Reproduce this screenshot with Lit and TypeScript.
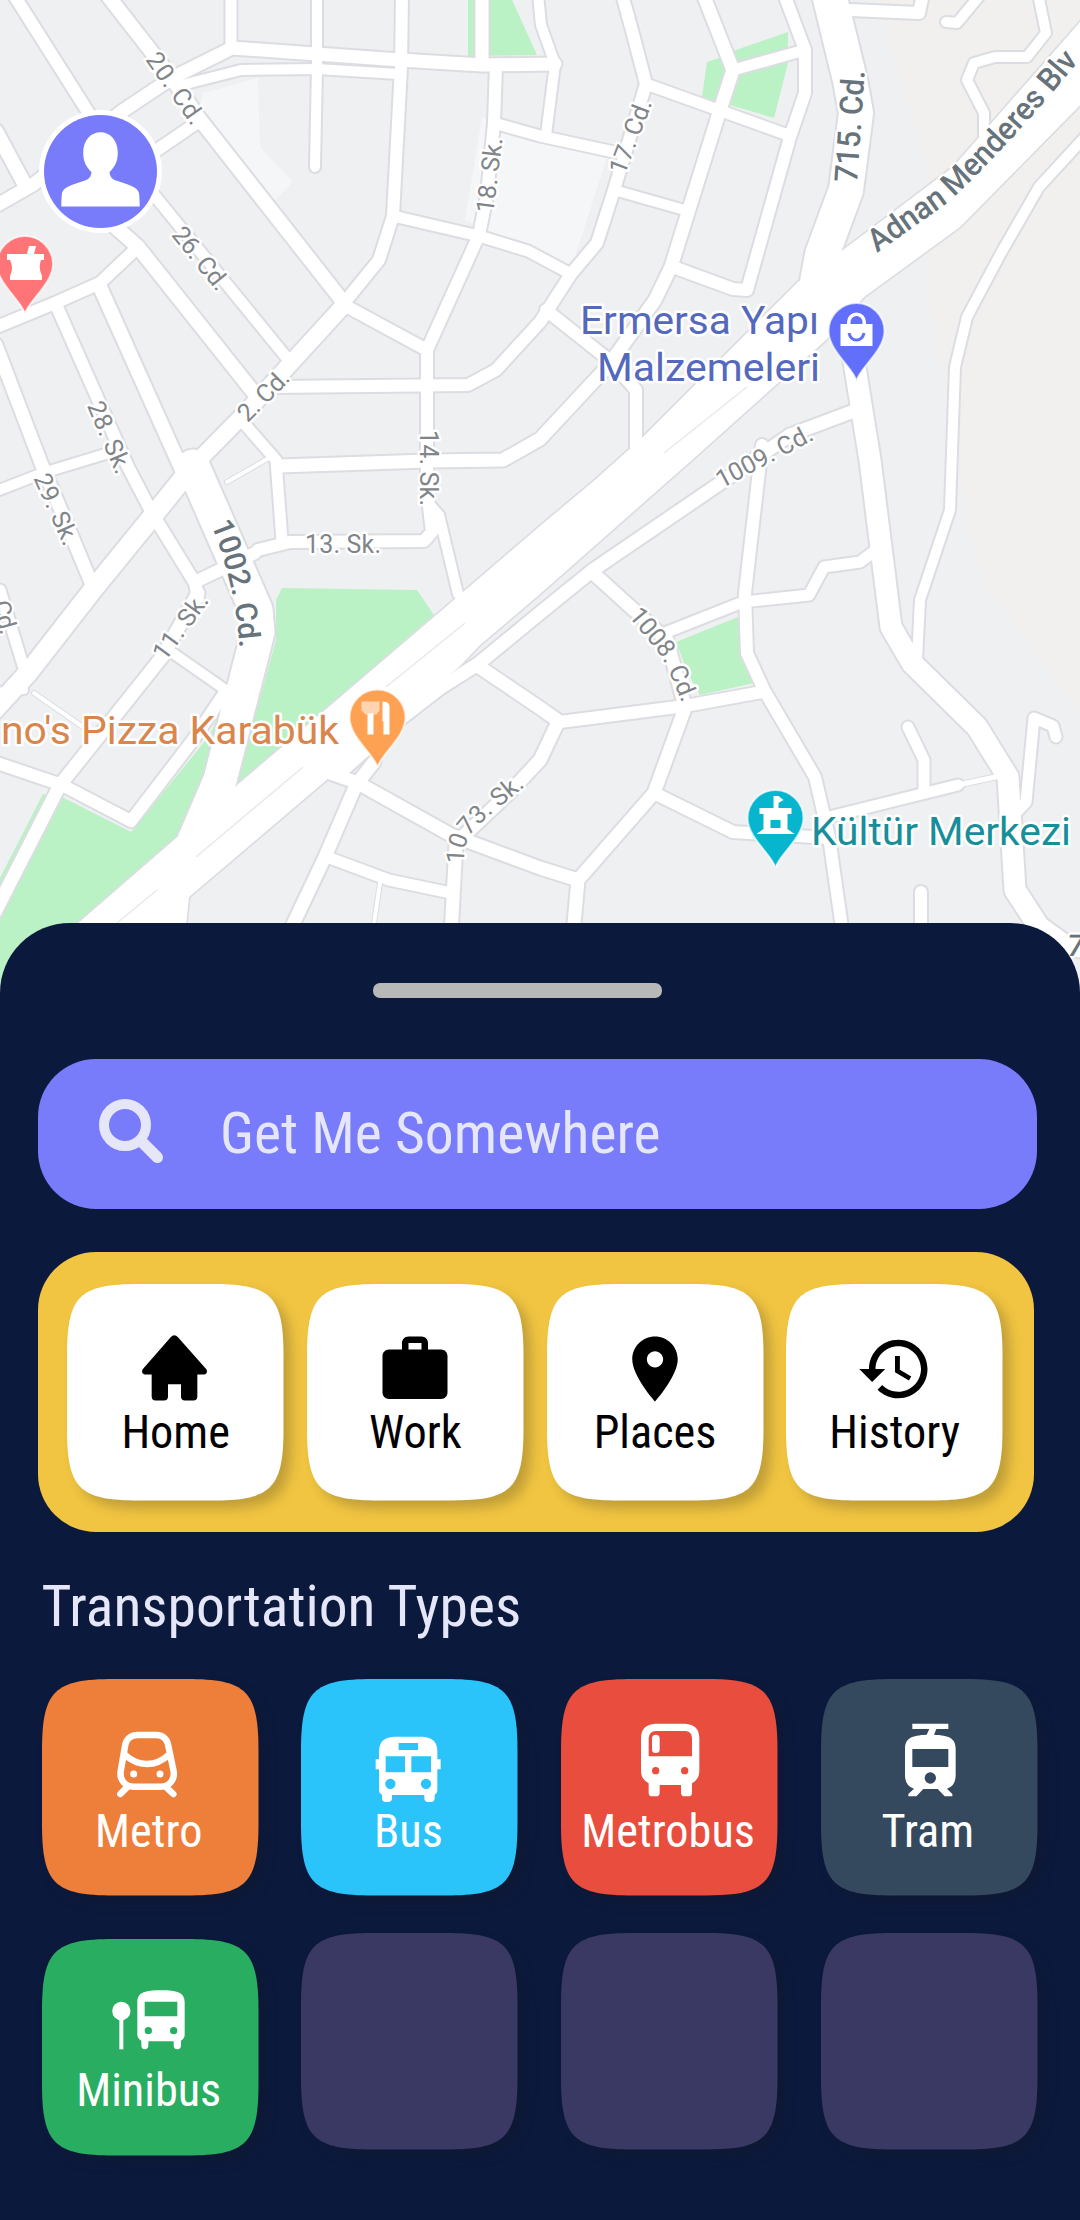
import { LitElement, html, svg, css } from "lit";
import { customElement, property } from "lit/decorators.js";

type Road = [width: number, points: string];

const ROADS: Road[] = [
  [12, "12,-8 88,112 100,130"],
  [14, "105,-8 172,78 198,117 344,303"],
  [13, "-6,207 34,184 121,112 172,78 232,48 400,60 482,65 555,64"],
  [10, "178,86 241,70 317,69 398,74"],
  [11, "231,-6 231,48"],
  [10, "317,-6 317,66 315,167"],
  [12, "402,-6 401,67 393,216 379,260 344,303"],
  [16, "344,305 291,363 248,410 193,466"],
  [19, "193,466 152,517 95,587 28,673 -6,710"],
  [13, "482,-6 482,64"],
  [12, "496,66 494,123 487,195 479,235 427,350 427,487 430,515 432,532 424,541 290,542 258,550"],
  [10, "430,505 439,515 458,594"],
  [11, "494,123 540,136 614,152"],
  [11, "393,216 479,236 528,251 571,274"],
  [12, "344,305 427,350"],
  [12, "270,387 468,385 496,370 540,322 571,274 597,243 614,190 646,84 634,38 622,-6"],
  [11, "241,420 276,460 282,541"],
  [13, "279,466 427,461 503,460 540,439 609,365 655,300 671,267 719,113 733,70 703,-6"],
  [12, "546,310 609,360 636,390 636,450"],
  [10, "614,190 681,209"],
  [12, "673,267 733,289 747,290 790,137 805,93 805,50 784,-6"],
  [11, "733,70 805,50"],
  [11, "646,84 788,135"],
  [10, "538,-6 541,25 555,64 546,135"],
  [34, "829,-6 850,80 856,113 846,190 822,255 812,310"],
  [13, "345,768 396,722 440,688 478,664 540,613 593,570 719,484 790,435 854,411"],
  [13, "478,666 540,708 560,722"],
  [12, "560,722 685,706 762,692"],
  [13, "558,722 540,760 510,792 456,843 451,935"],
  [13, "685,708 654,793 578,880 573,935"],
  [12, "654,793 733,832 829,838"],
  [13, "330,773 358,783 451,835 540,868 578,880"],
  [13, "374,762 356,785 325,857 288,935"],
  [11, "327,857 389,880 451,893"],
  [4, "380,883 373,930"],
  [13, "593,573 667,640 685,707"],
  [11, "667,632 743,602 809,595 824,567 860,562 876,550"],
  [12, "762,445 745,593 747,653 764,690 815,777 829,837 843,935"],
  [21, "849,330 857,380 870,460 891,627 912,663 977,727 1008,777 1015,890 1039,927 1064,945 1090,948"],
  [10, "1084,138 1039,187 1001,253 967,317 955,367 951,480 950,510 920,600 917,660"],
  [10, "984,140 984,113 967,80 974,63 995,57 1027,57 1046,33 1038,-6"],
  [10, "946,22 957,23 981,-6"],
  [12, "850,10 919,13 923,-6"],
  [11, "908,727 924,760 924,793"],
  [11, "829,817 958,785"],
  [5, "958,785 1000,776"],
  [11, "1056,737 1053,726 1034,718 1026,802 1012,817"],
  [12, "921,892 921,935"],
  [14, "110,222 138,247 258,398"],
  [11, "150,190 291,363"],
  [12, "135,165 198,122"],
  [12, "138,247 100,283 55,303 -6,328"],
  [14, "100,287 182,470"],
  [12, "57,307 128,467 152,513 195,583 198,598"],
  [13, "-4,345 41,463 65,520 93,587"],
  [10, "-6,492 43,473 112,452"],
  [14, "-4,131 25,185"],
  [33, "193,466 224,537 256,610 258,632 238,710 220,780 190,850 160,900"],
  [4, "227,482 269,458"],
  [12, "255,553 195,582"],
  [13, "198,593 162,657 60,785 -8,918"],
  [10, "167,649 230,693"],
  [12, "224,694 193,740 131,821 62,785 -6,762"],
  [11, "0,590 26,675"],
  [8, "-6,692 24,690"],
  [4, "34,693 83,727"],
];

const HIGHWAY =
  "1095,5 953,167 843,250 798,282 643,437 595,480 540,526 434,617 235,787 76,925 0,990 186,990 186,925 189,897 330,777 400,712 458,668 480,645 540,594 667,482 692,460 826,340 864,297 960,227 1095,90";

const LANES = ["196,857 303,767", "386,687 465,623", "117,923 157,890", "664,453 747,387"];

const PARKS = [
  "468,0 512,0 537,55 468,56",
  "736,50 788,32 788,63 774,118 702,97 707,62 722,57",
  "282,588 417,590 434,615 235,787 230,800 254,720 276,640 276,600",
  "0,990 0,878 43,794 62,797 131,832 210,735 225,700 220,800 172,845 110,930 40,990",
  "676,642 738,617 743,657 754,683 700,695 688,673",
];

/* text, centre x, centre y, angle, drawn length */
const STREETS: [string, number, number, number, number][] = [
  ["20. Cd.", 176, 88, 55, 82],
  ["26. Cd.", 201, 258, 51, 74],
  ["18. Sk.", 489, 175, -83, 76],
  ["17. Cd.", 630, 136, -69, 78],
  ["2. Cd.", 263, 395, -45, 62],
  ["28. Sk.", 110, 437, 67, 76],
  ["29. Sk.", 57, 509, 66, 76],
  ["14. Sk.", 429, 468, 90, 76],
  ["13. Sk.", 343, 544, 0, 76],
  ["11. Sk.", 180, 626, -54, 76],
  ["1009. Cd.", 764, 456, -28, 106],
  ["Cd.", 5, 617, 74, 34],
];

const PIN = "M0 50C-3 37-28 20-28 0A28 28 0 0 1 28 0C28 20 3 37 0 50Z";

@customElement("city-map")
export class CityMap extends LitElement {
  static styles = css`
    :host { display: block; font-stretch: 100%; }
    .map { display: block; width: 1080px; height: 1010px; }
    .case { fill: none; stroke: #dcdde2; stroke-linejoin: round; stroke-linecap: round; }
    .fill { fill: none; stroke: #fff; stroke-linejoin: round; stroke-linecap: round; }
    .hwcase { fill: #fff; stroke: #dcdde2; stroke-width: 3.4; }
    .hwfill { fill: #fff; }
    .lane { fill: none; stroke: #e9e9ed; stroke-width: 1.5; }
    .park { fill: #baf1c5; }
    .sand { fill: #f1f0ee; }
    .block { fill: #f5f6f8; }
    text { font-family: Roboto, "Liberation Sans", sans-serif; font-stretch: 100%; paint-order: stroke; stroke: #fff; stroke-width: 5px; stroke-linejoin: round; }
    .street { font-size: 25px; fill: #7f8589; text-anchor: middle; }
    .streetline { font-size: 25px; fill: #7f8589; }
    .major { font-size: 32px; font-weight: 500; fill: #67737a; }
    .avenue { font-size: 30px; font-weight: 500; fill: #67737a; }
    .poi { font-size: 39.5px; }
    .shop { fill: #5468bd; }
    .food { fill: #d9854c; }
    .culture { fill: #178e9a; }
    .pin { stroke: #fff; stroke-width: 2; stroke-opacity: .7; }
    .pale { opacity: .55; }
  `;

  render() {
    return html`<svg class="map" viewBox="0 0 1080 1010">
      <rect width="1080" height="1010" fill="#eff0f2"></rect>
      <polygon class="sand" points="878,0 885,30 926,160 927,280 935,340 960,460 967,520 984,583 1080,713 1080,0"></polygon>
      <polygon class="block" points="203,93 258,78 260,147 293,182 275,200 198,113"></polygon>
      <polygon class="block" points="482,117 608,155 571,268 465,220"></polygon>
      ${PARKS.map((p) => svg`<polygon class="park" points=${p}></polygon>`)}
      ${ROADS.map(([w, p]) => svg`<polyline class="case" stroke-width=${w + (w < 6 ? 2 : 4)} points=${p}></polyline>`)}
      <polygon class="hwcase" points=${HIGHWAY}></polygon>
      ${ROADS.map(([w, p]) => svg`<polyline class="fill" stroke-width=${w} points=${p}></polyline>`)}
      <polygon class="hwfill" points=${HIGHWAY}></polygon>
      ${LANES.map((p) => svg`<polyline class="lane" points=${p}></polyline>`)}

      ${STREETS.map(
        ([t, x, y, a, len]) => svg`<text class="street" transform="translate(${x} ${y}) rotate(${a})" y="9" textLength=${len}>${t}</text>`
      )}
      <path id="p1008" fill="none" d="M628 616L658 652Q667 664 684 708"></path>
      <text class="streetline"><textPath href="#p1008" textLength="104">1008. Cd.</textPath></text>
      <path id="p1073" fill="none" d="M464 864C464 838 470 832 490 815L534 779"></path>
      <text class="streetline"><textPath href="#p1073" textLength="104">1073. Sk.</textPath></text>
      <path id="p1002" fill="none" d="M211 524Q238 590 240 660"></path>
      <text class="avenue"><textPath href="#p1002" textLength="128">1002. Cd.</textPath></text>
      <text class="major" transform="translate(849 126) rotate(-86)" x="-56" y="12" textLength="112" lengthAdjust="spacingAndGlyphs">715. Cd.</text>
      <path id="adnan" fill="none" d="M877 253L946 204Q985 170 1053 92L1110 24"></path>
      <text class="major"><textPath href="#adnan" textLength="280" lengthAdjust="spacingAndGlyphs">Adnan Menderes Blv</textPath></text>
      <text class="avenue" transform="translate(1066 956) skewX(-8)">7</text>

      <g transform="translate(25 264)"><path class="pin" d=${PIN} fill="#ff7477"></path>
        <path fill="#fff" d="M-18-10H2L4-18H11L9-10H19V-4H16Q13 4 17 12V16H-15V12Q-11 4-15-4H-18Z"></path></g>
      <g transform="translate(856.5 331)"><path class="pin" d=${PIN} fill="#616ffb"></path>
        <path fill="#fff" d="M-16-7H-9.500V-9A9.500 9.500 0 0 1 9.500-9V-7H16V15H-16Z"></path>
        <path fill="#616ffb" d="M-6-7V-9A6 6 0 0 1 6-9V-7Z"></path>
        <path fill="none" stroke="#616ffb" stroke-width="3" d="M-7.500 2Q-6 9 0 9T7.500 2"></path></g>
      <g transform="translate(377.500 717.500)"><path class="pin" d=${PIN} fill="#ffa152"></path>
        <path class="pale" fill="#fff" d="M-16-16H2V-7L-1-3H-12L-16-7Z"></path>
        <path fill="#fff" d="M-10-4H-4V17H-10ZM5-16Q11-16 12-12V17H6V4H5Z"></path></g>
      <g transform="translate(775.500 818)"><path class="pin" d=${PIN} fill="#08b5cf"></path>
        <path fill="#fff" d="M-16-10H-2V-22H3L8-18L3-15V-10H16V-4H12V11L19 16H-19L-12 11V-4H-16Z"></path>
        <path fill="#08b5cf" d="M-5 2H5V10H-5Z"></path></g>

      <text class="poi shop" x="580" y="334" textLength="239" lengthAdjust="spacingAndGlyphs">Ermersa Yapı</text>
      <text class="poi shop" x="597" y="381" textLength="223" lengthAdjust="spacingAndGlyphs">Malzemeleri</text>
      <text class="poi food" x="1" y="744" textLength="338" lengthAdjust="spacingAndGlyphs">no's Pizza Karabük</text>
      <text class="poi culture" x="811" y="845" textLength="260" lengthAdjust="spacingAndGlyphs">Kültür Merkezi</text>
    </svg>`;
  }
}

const SQUIRCLE =
  "M0 72C0 12 12 0 72 0H144.500C204.500 0 216.500 12 216.500 72V144.500C216.500 204.500 204.500 216.500 144.500 216.500H72C12 216.500 0 204.500 0 144.500Z";

const ICONS: Record<string, unknown> = {
  home: svg`<svg viewBox="320 268.500 234 234"><path d="M421 290Q432 279 443 290L528 386Q534 397 522 402L501 402V468Q501 480 489 480H464Q452 480 452 468V431H413V468Q413 480 401 480H376Q364 480 364 468V402H343Q331 398 337 386Z"/></svg>`,
  work: svg`<svg viewBox="0 0 24 24"><path d="M20 6h-4V4c0-1.110-.89-2-2-2h-4c-1.110 0-2 .89-2 2v2H4c-1.110 0-2 .89-2 2v11.200c0 1.110.89 2 2 2h16c1.110 0 2-.89 2-2V8c0-1.110-.89-2-2-2zm-6 0h-4V4h4v2z"/></svg>`,
  places: svg`<svg viewBox="0 0 24 24"><path d="M12 2C8.130 2 5 5.130 5 9c0 5.250 7 13 7 13s7-7.750 7-13c0-3.870-3.130-7-7-7zm0 9.500c-1.380 0-2.500-1.120-2.500-2.500s1.120-2.500 2.500-2.500 2.500 1.120 2.500 2.500-1.120 2.500-2.500 2.500z"/></svg>`,
  history: svg`<svg viewBox="0 0 24 24"><path d="M13 3c-4.970 0-9 4.030-9 9H1l3.890 3.890.07.14L9 12H6c0-3.870 3.130-7 7-7s7 3.130 7 7-3.130 7-7 7c-1.930 0-3.680-.79-4.940-2.060l-1.420 1.420C8.270 19.990 10.510 21 13 21c4.970 0 9-4.030 9-9s-4.030-9-9-9zm-1 5v5l4.280 2.540.72-1.210-3.500-2.080V8H12z"/></svg>`,
  metro: svg`<svg viewBox="242 498 234 234"><g fill="none" stroke="currentColor" stroke-width="19.500" stroke-linecap="round" stroke-linejoin="round"><path d="M322 525H378C396 525 409 536 413 553L430 634C434 661 415 680 391 680H310C286 680 267 661 271 634L285 553C289 536 303 525 322 525Z"/><path d="M282 583Q314 612 350 612T417 583M289 683L270 702M409 683L429 702"/></g><circle cx="310" cy="642" r="10.500"/><circle cx="389" cy="642" r="10.500"/></svg>`,
  bus: svg`<svg viewBox="1021 498 234 234"><path fill-rule="evenodd" d="M1092 530H1179Q1223 532 1223 574V598H1233V628H1223V692Q1223 700 1215 704V714Q1215 726 1204 726H1196Q1184 726 1184 714V705H1087V714Q1087 726 1075 726H1068Q1057 726 1057 714V704Q1048 700 1048 692V628H1038V598H1048V574Q1048 532 1092 530ZM1107 549V570H1165V549ZM1068 589V637H1126V589ZM1145 589V637H1204V589ZM1082 656A15.500 15.500 0 1 0 1082 687A15.500 15.500 0 1 0 1082 656ZM1189 656A15.500 15.500 0 1 0 1189 687A15.500 15.500 0 1 0 1189 656Z"/></svg>`,
  metrobus: svg`<svg viewBox="300 498 234 234"><path fill-rule="evenodd" d="M376 491H465Q508 493 508 535V632Q508 658 486 670V698Q486 709 475 709H464Q453 709 453 698V675H389V698Q389 709 378 709H367Q356 709 356 698V670Q333 658 333 632V535Q333 493 376 491ZM378 513Q357 514 356 535V589H486V535Q486 514 465 513ZM377 621A11 11 0 1 0 377 643A11 11 0 1 0 377 621ZM464 621A11 11 0 1 0 464 643A11 11 0 1 0 464 621Z"/><rect x="366" y="524" width="23" height="55" rx="11.500"/></svg>`,
  tram: svg`<svg viewBox="1079 498 234 234"><path fill-rule="evenodd" d="M1146 491H1254V507H1218L1211 524C1256 526 1276 534 1276 567V645Q1276 678 1250 686L1266 702V709H1243L1222 687H1179L1158 709H1134V702L1151 686Q1124 678 1124 645V567C1124 534 1144 526 1189 524L1197 507H1146ZM1146 567V621H1254V567ZM1200 637A17 17 0 1 0 1200 671A17 17 0 1 0 1200 637Z"/></svg>`,
  minibus: svg`<svg viewBox="242 257 234 234"><circle cx="273" cy="332" r="27.500"/><path d="M267 350H279V447H267Z"/><path fill-rule="evenodd" d="M392 270C440 270 463 276 463 306V404Q463 414 452 421V435Q452 447 441 447Q430 447 430 435V423H354V435Q354 447 343 447Q333 447 333 435V421Q321 414 321 404V306C321 276 344 270 392 270ZM343 304V348H441V304ZM354 380A11 11 0 1 0 354 402A11 11 0 1 0 354 380ZM430 380A11 11 0 1 0 430 402A11 11 0 1 0 430 380Z"/></svg>`,
};

@customElement("app-tile")
export class AppTile extends LitElement {
  static styles = css`
    :host { display: block; width: 216.5px; height: 216.5px; }
    .tile { display: grid; height: 100%; }
    .shape, .content { grid-area: 1 / 1; }
    .shape { width: 216.5px; height: 216.5px; overflow: visible; filter: drop-shadow(8px 8px 6px rgba(22, 22, 22, .22)); }
    .content { position: relative; display: flex; flex-direction: column; align-items: center; padding-top: 46px; color: #fff; }
    .content svg { width: 78px; height: 78px; overflow: visible; fill: currentColor; }
    .label { margin-top: -1px; font: 400 46.3px/50px "Roboto Condensed", Roboto, sans-serif; font-stretch: 75%; white-space: nowrap; }
    .white .shape { fill: #fff; }
    .white .content { color: #000; }
    .orange .shape { fill: #ed7f3b; }
    .blue .shape { fill: #2bc4fa; }
    .red .shape { fill: #e84d3d; }
    .slate .shape { fill: #34495e; }
    .green .shape { fill: #29ae61; }
    .empty .shape { fill: #3a3963; }
    .type .content { padding-top: 47px; }
    .type .label { margin-top: 1.5px; margin-left: -2px; }
  `;

  @property() tone = "white";
  @property() icon = "";
  @property() label = "";

  render() {
    return html`<div class="tile ${this.tone} ${this.tone === "white" ? "" : "type"}">
      <svg class="shape" viewBox="0 0 216.5 216.5"><path d=${SQUIRCLE}></path></svg>
      ${this.label
        ? html`<div class="content">${ICONS[this.icon]}<span class="label">${this.label}</span></div>`
        : null}
    </div>`;
  }
}

const SHORTCUTS = [
  ["home", "Home"],
  ["work", "Work"],
  ["places", "Places"],
  ["history", "History"],
];

const TYPES = [
  ["orange", "metro", "Metro"],
  ["blue", "bus", "Bus"],
  ["red", "metrobus", "Metrobus"],
  ["slate", "tram", "Tram"],
  ["green", "minibus", "Minibus"],
  ["empty", "", ""],
  ["empty", "", ""],
  ["empty", "", ""],
];

@customElement("app-root")
export class AppRoot extends LitElement {
  static styles = css`
    :host { display: block; width: 1080px; height: 2220px; overflow: hidden; font-family: "Roboto Condensed", Roboto, sans-serif; font-stretch: 75%; }
    .screen { position: relative; display: flex; flex-direction: column; height: 2220px; background: #0b193d; }
    .avatar { position: absolute; left: 39px; top: 110px; width: 123px; height: 123px; }
    .sheet { position: relative; box-sizing: border-box; flex: 1; margin-top: -87px; padding: 60px 43px 0 38px; display: flex; flex-direction: column; background: #0b193d; border-radius: 70px 70px 0 0; }
    .handle { width: 289px; height: 15px; margin-left: 335px; border-radius: 7px; background: #b8b8b8; }
    .search { display: flex; align-items: center; box-sizing: border-box; width: 999px; height: 150px; margin-top: 61px; padding-left: 61px; border-radius: 58px; background: #787bfa; color: #e5e6f7; }
    .glass { width: 64px; height: 64px; margin-top: -6px; }
    .query { margin-left: 57px; font-size: 57.6px; line-height: 68px; white-space: nowrap; }
    .shortcuts { display: flex; box-sizing: border-box; gap: 23.2px; width: 996px; height: 280px; margin-top: 43px; padding: 32px 0 0 29.4px; border-radius: 58px; background: #f1c541; }
    .heading { margin: 41px 0 0 3.5px; font-size: 57.6px; font-weight: 400; line-height: 68px; color: #e5e6f7; }
    .types { display: grid; grid-template-columns: repeat(4, 216.5px); column-gap: 43.2px; row-gap: 37px; margin: 38px 0 0 3.5px; }
    .low { margin-top: 6px; }
  `;

  render() {
    return html`<main class="screen">
      <city-map></city-map>
      <svg class="avatar" viewBox="39 110 123 123">
        <circle cx="100.5" cy="171.5" r="61.500" fill="#fff"></circle>
        <circle cx="100.5" cy="171.5" r="56.500" fill="#787bfa"></circle>
        <path fill="#fff" d="M100.500 132.300C110 132.300 117.800 140 117.800 153C117.800 162 114 168 109.500 172C110 177 112 179 116 180.500C126 184 137 186 139 193C139.500 197 139.700 202 139.700 206.500H61.300C61.300 202 61.500 197 62 193C64 186 75 184 85 180.500C89 179 91 177 91.500 172C87 168 83.200 162 83.200 153C83.200 140 91 132.300 100.500 132.300Z"></path>
      </svg>
      <section class="sheet">
        <div class="handle"></div>
        <div class="search">
          <svg class="glass" viewBox="0 0 64 64" fill="none" stroke="currentColor">
            <circle cx="26" cy="26" r="21" stroke-width="10"></circle>
            <path d="M43 43L58.500 58.500" stroke-width="11.500"></path>
            <circle cx="58.500" cy="58.500" r="5.5" fill="currentColor" stroke="none"></circle>
          </svg>
          <span class="query">Get Me Somewhere</span>
        </div>
        <div class="shortcuts">
          ${SHORTCUTS.map(([icon, label]) => html`<app-tile tone="white" icon=${icon} label=${label}></app-tile>`)}
        </div>
        <h1 class="heading">Transportation Types</h1>
        <div class="types">
          ${TYPES.map(([tone, icon, label]) => html`<app-tile class=${icon === "minibus" ? "low" : ""} tone=${tone} icon=${icon} label=${label}></app-tile>`)}
        </div>
      </section>
    </main>`;
  }
}
